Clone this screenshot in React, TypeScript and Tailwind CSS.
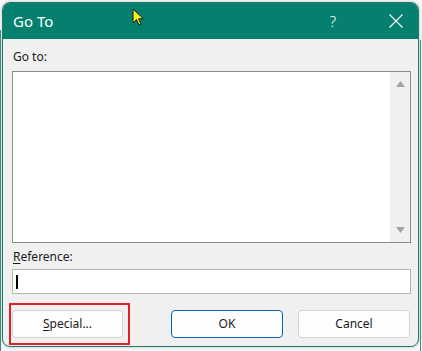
import React from "react";

const font = { fontFamily: '"Noto Sans", "Open Sans", Arial, sans-serif' };

function Cursor() {
  return (
    <svg
      className="absolute left-[132px] top-[8px]"
      width="14"
      height="20"
      viewBox="0 0 14 20"
    >
      <path
        d="M1 1 L1 15 L4.5 11.5 L7 17 L9 16 L6.7 10.8 L11.5 10.8 Z"
        fill="#f4ec1c"
        stroke="#1a1a1a"
        strokeWidth="1"
        strokeLinejoin="round"
      />
    </svg>
  );
}

function Btn({
  children,
  primary,
}: {
  children: React.ReactNode;
  primary?: boolean;
}) {
  return (
    <div
      className={
        "h-[28px] flex items-center justify-center rounded-[4px] bg-[#fdfdfd] text-[12px] text-[#1b1b1b] " +
        (primary ? "border border-[#0067c0]" : "border border-[#d3d3d3]")
      }
    >
      {children}
    </div>
  );
}

export default function App() {
  return (
    <div
      className="relative w-[422px] h-[351px] overflow-hidden bg-[#f7f7f7] pt-[2px] pl-[2px]"
      style={font}
    >
      <div className="absolute left-0 top-[30px] w-[1px] h-[321px] bg-[#3b8f80]" />
      <div className="absolute left-[420px] top-[40px] w-[1px] h-[311px] bg-[#3b8f80]" />
      <div className="w-[417px] h-[345px] flex flex-col rounded-[8px] border border-[#1c7b6c] bg-[#f0f0f0] overflow-hidden shadow-[0_0_3px_rgba(0,0,0,0.25)]">
        {/* title bar */}
        <div className="h-[36px] shrink-0 bg-[#05806f] flex items-center text-white">
          <div className="pl-[10px] text-[15px] leading-none">Go To</div>
          <div className="flex-1" />
          <div className="w-[20px] text-[15px] leading-none font-light text-center mr-[46px]">
            ?
          </div>
          <svg width="14" height="14" viewBox="0 0 14 14" className="mr-[15px]">
            <path d="M0.5 0.5 L13.5 13.5 M13.5 0.5 L0.5 13.5" stroke="white" strokeWidth="1.1" />
          </svg>
        </div>
        {/* body */}
        <div className="flex-1 flex flex-col pl-[9px] pr-[7px] pt-[10px] pb-[8px] text-[12px] text-[#1b1b1b]">
          <div className="h-[16px] leading-[16px] pl-[1px]">Go to:</div>
          <div className="mt-[6px] h-[172px] border border-[#8c8c8c] bg-white flex">
            <div className="flex-1" />
            <div className="w-[20px] bg-[#f0f0f0] flex flex-col items-center justify-between py-[9px]">
              <svg width="9" height="6" viewBox="0 0 9 6">
                <path d="M4.5 0 L9 6 L0 6 Z" fill="#a3a3a3" />
              </svg>
              <svg width="9" height="6" viewBox="0 0 9 6">
                <path d="M0 0 L9 0 L4.5 6 Z" fill="#a3a3a3" />
              </svg>
            </div>
          </div>
          <div className="mt-[6px] h-[16px] leading-[16px] pl-[1px]">
            <span className="underline underline-offset-2">R</span>eference:
          </div>
          <div className="mt-[4px] h-[25px] border border-[#b4b4b4] bg-white flex items-center pl-[3px]">
            <div className="w-[2px] h-[14px] bg-black" />
          </div>
          <div className="mt-[16px] flex">
            <div className="relative w-[111px]">
              <Btn>
                <span>
                  <span className="underline underline-offset-2">S</span>pecial...
                </span>
              </Btn>
              <div className="absolute -left-[3px] -top-[7px] -right-[7px] -bottom-[7px] border-2 border-[#e0202a]" />
            </div>
            <div className="ml-[48px] w-[112px]">
              <Btn primary>OK</Btn>
            </div>
            <div className="ml-[15px] w-[112px]">
              <Btn>Cancel</Btn>
            </div>
          </div>
        </div>
      </div>
      <Cursor />
    </div>
  );
}
